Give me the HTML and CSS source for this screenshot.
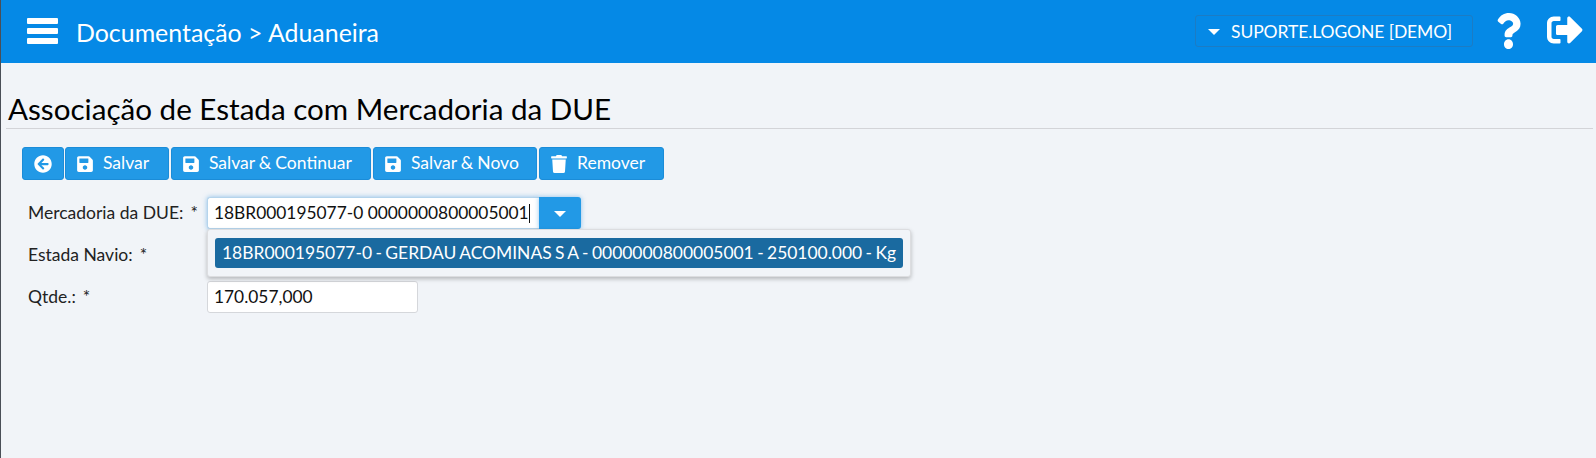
FILE: index.html
```html
<!DOCTYPE html>
<html lang="pt">
<head>
<meta charset="utf-8">
<title>Associação de Estada com Mercadoria da DUE</title>
<link rel="stylesheet" href="styles.css">
</head>
<body>
<header class="topbar">
  <div class="burger"><span></span><span></span><span></span></div>
  <div class="crumb">Documentação &gt; Aduaneira</div>
  <div class="user"><span class="caret"></span><span>SUPORTE.LOGONE [DEMO]</span></div>
  <svg class="ic-help" viewBox="0 0 384 512" preserveAspectRatio="none"><path fill="#fff" d="M202.021 0C122.202 0 70.503 32.703 29.914 91.026c-7.363 10.58-5.093 25.086 5.178 32.874l43.138 32.709c10.373 7.865 25.132 6.026 33.253-4.148 25.049-31.381 43.63-49.449 82.757-49.449 30.764 0 68.816 19.799 68.816 49.631 0 22.552-18.617 34.134-48.993 51.164-35.423 19.86-82.299 44.576-82.299 106.405V320c0 13.255 10.745 24 24 24h72.471c13.255 0 24-10.745 24-24v-5.773c0-42.86 125.268-44.645 125.268-160.627C377.504 66.256 286.902 0 202.021 0zM192 373.459c-38.196 0-69.271 31.075-69.271 69.271 0 38.195 31.075 69.27 69.271 69.27s69.271-31.075 69.271-69.271-31.075-69.27-69.271-69.27z"/></svg>
  <svg class="ic-exit" viewBox="0 0 512 512"><path fill="#fff" d="M497 273L329 441c-15 15-41 4.5-41-17v-96H152c-13.3 0-24-10.7-24-24v-96c0-13.3 10.7-24 24-24h136V88c0-21.4 25.9-32 41-17l168 168c9.3 9.4 9.3 24.6 0 34zM192 436v-40c0-6.6-5.4-12-12-12H96c-17.7 0-32-14.3-32-32V160c0-17.7 14.3-32 32-32h84c6.6 0 12-5.4 12-12V76c0-6.6-5.4-12-12-12H96c-53 0-96 43-96 96v192c0 53 43 96 96 96h84c6.6 0 12-5.4 12-12z"/></svg>
</header>
<main class="content">
  <h1 class="title">Associação de Estada com Mercadoria da DUE</h1>
  <div class="toolbar">
    <button class="btn btn-back"><svg class="ic" viewBox="0 0 512 512"><path fill="#fff" d="M256 504C119 504 8 393 8 256S119 8 256 8s248 111 248 248-111 248-248 248zm28.9-143.6L209.4 288H392c13.3 0 24-10.7 24-24v-16c0-13.3-10.7-24-24-24H209.4l75.5-72.4c9.7-9.3 9.9-24.8.4-34.3l-11-10.9c-9.4-9.4-24.6-9.4-33.9 0L107.7 239c-9.4 9.4-9.4 24.6 0 33.9l132.7 132.7c9.4 9.4 24.6 9.4 33.9 0l11-10.9c9.5-9.5 9.3-25-.4-34.3z"/></svg></button>
    <button class="btn w-salvar"><svg class="ic" viewBox="0 0 448 512"><path fill="#fff" d="M433.941 129.941l-83.882-83.882A48 48 0 0 0 316.118 32H48C21.49 32 0 53.49 0 80v352c0 26.51 21.49 48 48 48h352c26.51 0 48-21.49 48-48V163.882a48 48 0 0 0-14.059-33.941zM224 416c-35.346 0-64-28.654-64-64 0-35.346 28.654-64 64-64s64 28.654 64 64c0 35.346-28.654 64-64 64zm96-304.52V212c0 6.627-5.373 12-12 12H76c-6.627 0-12-5.373-12-12V108c0-6.627 5.373-12 12-12h228.52c3.183 0 6.235 1.264 8.485 3.515l3.48 3.48A11.996 11.996 0 0 1 320 111.48z"/></svg><span class="btxt">Salvar</span></button>
    <button class="btn w-cont"><svg class="ic" viewBox="0 0 448 512"><path fill="#fff" d="M433.941 129.941l-83.882-83.882A48 48 0 0 0 316.118 32H48C21.49 32 0 53.49 0 80v352c0 26.51 21.49 48 48 48h352c26.51 0 48-21.49 48-48V163.882a48 48 0 0 0-14.059-33.941zM224 416c-35.346 0-64-28.654-64-64 0-35.346 28.654-64 64-64s64 28.654 64 64c0 35.346-28.654 64-64 64zm96-304.52V212c0 6.627-5.373 12-12 12H76c-6.627 0-12-5.373-12-12V108c0-6.627 5.373-12 12-12h228.52c3.183 0 6.235 1.264 8.485 3.515l3.48 3.48A11.996 11.996 0 0 1 320 111.48z"/></svg><span class="btxt">Salvar &amp; Continuar</span></button>
    <button class="btn w-novo"><svg class="ic" viewBox="0 0 448 512"><path fill="#fff" d="M433.941 129.941l-83.882-83.882A48 48 0 0 0 316.118 32H48C21.49 32 0 53.49 0 80v352c0 26.51 21.49 48 48 48h352c26.51 0 48-21.49 48-48V163.882a48 48 0 0 0-14.059-33.941zM224 416c-35.346 0-64-28.654-64-64 0-35.346 28.654-64 64-64s64 28.654 64 64c0 35.346-28.654 64-64 64zm96-304.52V212c0 6.627-5.373 12-12 12H76c-6.627 0-12-5.373-12-12V108c0-6.627 5.373-12 12-12h228.52c3.183 0 6.235 1.264 8.485 3.515l3.48 3.48A11.996 11.996 0 0 1 320 111.48z"/></svg><span class="btxt">Salvar &amp; Novo</span></button>
    <button class="btn w-rem"><svg class="ic" viewBox="0 0 448 512"><path fill="#fff" d="M432 32H312l-9.4-18.7A24 24 0 0 0 281.1 0H166.8a23.72 23.72 0 0 0-21.4 13.3L136 32H16A16 16 0 0 0 0 48v32a16 16 0 0 0 16 16h416a16 16 0 0 0 16-16V48a16 16 0 0 0-16-16zM53.2 467a48 48 0 0 0 47.9 45h245.8a48 48 0 0 0 47.9-45L416 128H32z"/></svg><span class="btxt">Remover</span></button>
  </div>
  <form class="form">
    <div class="row">
      <label class="lbl">Mercadoria da DUE:<span class="req">*</span></label>
      <div class="combo">
        <div class="combo-input"><span>18BR000195077-0 0000000800005001</span><i class="cursor"></i></div>
        <div class="combo-btn"><span class="caret"></span></div>
        <div class="menu"><div class="item">18BR000195077-0 - GERDAU ACOMINAS S A - 0000000800005001 - 250100.000 - Kg</div></div>
      </div>
    </div>
    <div class="row">
      <label class="lbl">Estada Navio:<span class="req">*</span></label>
    </div>
    <div class="row">
      <label class="lbl">Qtde.:<span class="req">*</span></label>
      <div class="field">170.057,000</div>
    </div>
  </form>
</main>
</body>
</html>
```
FILE: styles.css
```css
* { box-sizing: border-box; }
html, body { margin: 0; height: 458px; overflow: hidden; }
body {
  background: #f1f4f8;
  border-left: 1px solid #4a4f57;
  font-family: Lato, "Liberation Sans", sans-serif;
  color: #222;
}
.topbar {
  height: 63px;
  background: #0589e6;
  color: #fff;
  display: flex;
  align-items: center;
  padding-left: 26px;
}
.burger { width: 31px; display: flex; flex-direction: column; gap: 4px; margin-top: -1px; }
.burger span { display: block; height: 6px; background: #fff; border-radius: 1px; }
.crumb { margin-left: 18px; font-size: 24.9px; flex: 1; }
.user {
  width: 278px;
  height: 32px;
  border: 1px solid #1c7cc4;
  border-radius: 3px;
  display: flex;
  align-items: center;
  padding-left: 12px;
  gap: 11px;
  font-size: 17.5px;
  letter-spacing: -0.1px;
  margin-top: -1px;
}
.caret {
  display: block;
  width: 0;
  height: 0;
  border-left: 6px solid transparent;
  border-right: 6px solid transparent;
  border-top: 6px solid #fff;
  margin-top: 2px;
}
.ic-help { width: 25px; height: 36px; margin-left: 23px; margin-top: -2px; }
.ic-exit { width: 36px; height: 36px; margin-left: 26px; margin-right: 13px; margin-top: -3px; }
.content { padding: 0 3px 0 5px; }
.title {
  margin: 0;
  height: 66px;
  padding: 30px 0 0 2px;
  font-size: 29.6px;
  line-height: 32px;
  font-weight: 400;
  color: #000;
  border-bottom: 1px solid #d3d4d8;
}
.toolbar { display: flex; gap: 1px; margin: 18px 0 0 16px; }
.btn {
  height: 33px;
  background: #2299e6;
  border: 1px solid #1b8cd8;
  border-radius: 3px;
  color: #fff;
  font: 17.5px Lato, sans-serif;
  word-spacing: -0.4px;
  display: flex;
  align-items: center;
  padding: 0 0 0 10px;
}
.btxt { position: relative; top: -1px; }
.ic { width: 18px; height: 18px; margin-right: 9px; flex: none; }
.btn-back { width: 42px; padding-left: 11px; }
.btn-back .ic { margin: 0; }
.w-salvar { width: 104px; }
.w-cont { width: 200px; margin-left: 1px; }
.w-novo { width: 164px; margin-left: 1px; }
.w-rem { width: 125px; margin-left: 1px; }
.form { margin: 17px 0 0 22px; }
.row { display: flex; height: 42px; font-size: 17.5px; }
.lbl { width: 179px; height: 32px; line-height: 32px; flex: none; }
.req { margin-left: 7px; }
.combo { position: relative; display: flex; width: 374px; height: 32px; }
.combo-input {
  width: 332px;
  height: 32px;
  background: #fff;
  border: 1px solid #b5d4ec;
  border-right: 0;
  border-radius: 3px 0 0 3px;
  box-shadow: 0 0 5px rgba(60,150,220,.55);
  padding-left: 6px;
  line-height: 30px;
  font-size: 17.35px;
  white-space: nowrap;
  color: #111;
}
.cursor { display: inline-block; width: 1px; height: 19px; background: #111; vertical-align: -4px; }
.combo-btn {
  width: 42px;
  height: 32px;
  background: #2299e6;
  border-radius: 0 3px 3px 0;
  box-shadow: 0 0 5px rgba(60,150,220,.55);
  display: flex;
  align-items: center;
  justify-content: center;
}
.menu {
  position: absolute;
  left: 0;
  top: 32px;
  width: 704px;
  height: 48px;
  padding: 8px 7px;
  background: #f1f4f8;
  border: 1px solid #dcdde0;
  border-radius: 3px;
  box-shadow: 0 2px 4px rgba(0,0,0,.25);
  z-index: 2;
}
.item {
  height: 30px;
  line-height: 30px;
  background: #1a6aa0;
  color: #fff;
  border-radius: 3px;
  padding-left: 7px;
  font-size: 17.45px;
  word-spacing: -1.05px;
  white-space: nowrap;
}
.field {
  width: 211px;
  height: 32px;
  line-height: 30px;
  background: #fff;
  border: 1px solid #d5d7db;
  border-radius: 3px;
  padding-left: 6px;
  font-size: 17.35px;
  color: #111;
}
```
